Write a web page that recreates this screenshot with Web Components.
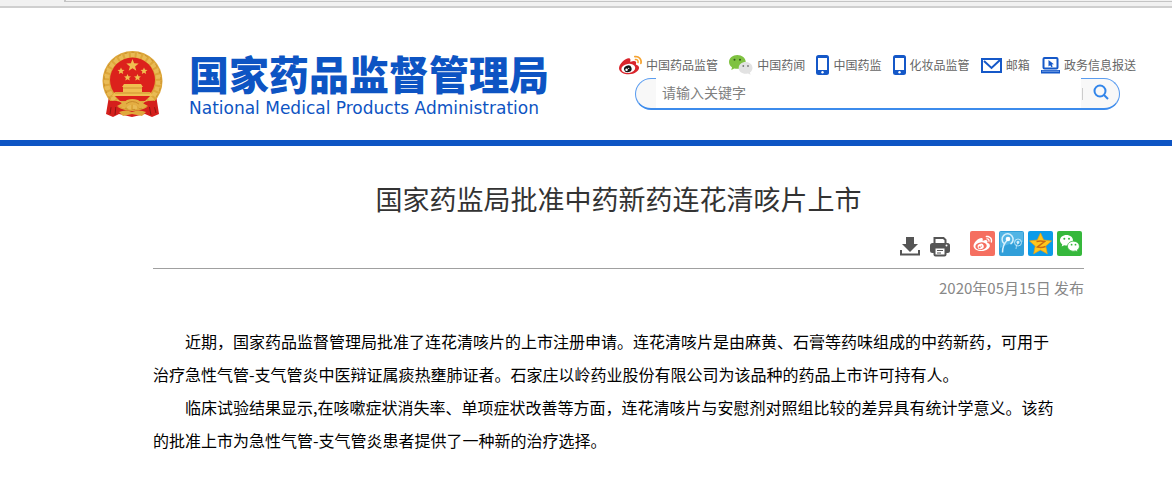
<!DOCTYPE html>
<html lang="zh-CN">
<head>
<meta charset="utf-8">
<title>国家药监局批准中药新药连花清咳片上市</title>
<style>
    body {
        margin: 0;
        background: #fff;
        color: #000;
        font-family: "Noto Sans CJK SC", "Noto Sans", sans-serif;
    }
</style>
</head>
<body>
<window-edge></window-edge>
<site-header>
    <site-logo slot="logo"></site-logo>
    <quick-link icon="weibo">中国药品监管</quick-link>
    <quick-link icon="wechat">中国药闻</quick-link>
    <quick-link icon="phone">中国药监</quick-link>
    <quick-link icon="phone">化妆品监管</quick-link>
    <quick-link icon="mail">邮箱</quick-link>
    <quick-link icon="laptop">政务信息报送</quick-link>
    <search-bar slot="search"></search-bar>
</site-header>
<news-article>
    <span slot="title">国家药监局批准中药新药连花清咳片上市</span>
    <article-tools slot="tools"></article-tools>
    <span slot="date">2020年05月15日 发布</span>
    <news-paragraph>近期，国家药品监督管理局批准了连花清咳片的上市注册申请。连花清咳片是由麻黄、石膏等药味组成的中药新药，可用于<br>治疗急性气管-支气管炎中医辩证属痰热壅肺证者。石家庄以岭药业股份有限公司为该品种的药品上市许可持有人。</news-paragraph>
    <news-paragraph>临床试验结果显示,在咳嗽症状消失率、单项症状改善等方面，连花清咳片与安慰剂对照组比较的差异具有统计学意义。该药<br>的批准上市为急性气管-支气管炎患者提供了一种新的治疗选择。</news-paragraph>
</news-article>

<script>
const WEIBO_BODY = 'M18.059 11.649c-.346-.105-.57-.18-.405-.615.375-.977.42-1.804 0-2.404-.781-1.112-2.915-1.053-5.364-.03 0 0-.766.331-.571-.271.376-1.217.315-2.224-.27-2.809-1.338-1.337-4.869.045-7.888 3.08C1.309 10.87 0 13.273 0 15.348c0 3.981 5.099 6.395 10.086 6.395 6.536 0 10.888-3.801 10.888-6.82 0-1.822-1.547-2.854-2.915-3.284z';
const WEIBO_WAVES = 'M19.967 6.557c-.766-.856-1.908-1.187-2.96-.962-.436.09-.706.511-.616.932.09.42.511.691.932.602.511-.105 1.067.044 1.442.465.376.421.466.977.316 1.473-.136.406.089.856.51.992.405.119.857-.105.992-.512.33-1.021.12-2.178-.646-3.035zM22.385 4.362c-1.576-1.757-3.905-2.419-6.054-1.968-.496.104-.812.587-.706 1.081.104.496.586.813 1.082.707 1.532-.331 3.185.15 4.296 1.383 1.112 1.246 1.429 2.943.947 4.416-.165.48.106 1.007.586 1.157.479.165.991-.104 1.157-.586.675-2.088.241-4.478-1.338-6.235z';

const weiboEye = (white, pupil) => `
    <ellipse cx="9.7" cy="15.6" rx="7.3" ry="4.8" fill="${white}" transform="rotate(-8 9.7 15.6)"/>
    <ellipse cx="9.2" cy="16" rx="4" ry="3.5" fill="${pupil}" transform="rotate(-18 9.2 16)"/>
    <circle cx="7.9" cy="16.9" r="1.3" fill="${white}"/>
    <circle cx="10.1" cy="15.5" r=".7" fill="${white}"/>`;

const LINK_ICONS = {
    weibo: `<svg width="23" height="22" viewBox="0 1 24 22"><path fill="#d9242b" d="${WEIBO_BODY}"/>${weiboEye('#fff', '#151515')}<path fill="#f5a331" d="${WEIBO_WAVES}"/></svg>`,
    wechat: `<svg width="24" height="20" viewBox="0 0 24 20">
        <path fill="#7fc241" d="M8.300 0C3.700 0 0 3 0 7c0 2.200 1.200 4 3 5.300L2.300 15l3-1.600c1 .3 2 .4 3 .4 4.700 0 8.400-3 8.400-6.900S13 0 8.300 0z"/>
        <circle cx="5.500" cy="4.800" r="1" fill="#32591c"/><circle cx="11" cy="4.800" r="1" fill="#32591c"/>
        <path fill="#e2e2e2" d="M16.700 7c-4 0-7 2.600-7 5.900s3 5.800 7 5.800c.8 0 1.500-.1 2.300-.3l2.600 1.400-.7-2.300c1.600-1.100 2.600-2.700 2.600-4.600 0-3.300-3-5.900-6.800-5.900z"/>
        <circle cx="14.300" cy="11" r=".9" fill="#777"/><circle cx="19" cy="11" r=".9" fill="#777"/></svg>`,
    phone: `<svg width="13" height="20" viewBox="0 0 13 20"><rect width="13" height="20" rx="2.500" fill="#1558c8"/><rect x="2" y="3" width="9" height="12" fill="#fff"/><circle cx="6.500" cy="17.300" r="1.200" fill="#fff"/></svg>`,
    mail: `<svg width="21" height="15" viewBox="0 0 21 15"><rect x="1" y="1" width="19" height="13" fill="#fff" stroke="#1558c8" stroke-width="2"/><path d="M3 3l7.500 7L19 2" fill="none" stroke="#1558c8" stroke-width="2"/></svg>`,
    laptop: `<svg width="19" height="17" viewBox="0 0 19 17"><rect x="2.500" y="1" width="14" height="10.500" rx="1" fill="#fff" stroke="#1558c8" stroke-width="2"/><path d="M0 13h19v3.500H0z" fill="#1558c8"/><path d="M1 14.200h17" stroke="#7fa5e4"/><path d="M7.500 3v6.500l1.700-1.300 1.200 2 1.300-.7-1-1.900 2.200-.4z" fill="#1558c8"/></svg>`
};

class WindowEdge extends HTMLElement {
    constructor() {
        super();
        this.attachShadow({ mode: 'open' }).innerHTML = `
            <style>
                :host {
                    display: block;
                    height: 6px;
                    padding-left: 64px;
                    background: #f1f1f1;
                    border-bottom: 2px solid #cfcfcf;
                }
                div {
                    height: 1px;
                    border-left: 2px solid #c4c4c4;
                    border-bottom: 1px solid #c4c4c4;
                }
            </style>
            <div></div>
        `;
    }
}

class SiteHeader extends HTMLElement {
    constructor() {
        super();
        this.attachShadow({ mode: 'open' }).innerHTML = `
            <style>
                :host {
                    display: block;
                    border-bottom: 6px solid #0e55c4;
                }
                header {
                    display: flex;
                    justify-content: space-between;
                    gap: 24px;
                    padding: 43px 36px 22px 102px;
                }
                .side {
                    flex: 0 1 517px;
                    padding-top: 2px;
                }
                nav {
                    display: flex;
                    justify-content: space-between;
                    height: 24px;
                }
                .search {
                    padding: 1px 16px 0 16px;
                }
            </style>
            <header>
                <slot name="logo"></slot>
                <div class="side">
                    <nav><slot></slot></nav>
                    <div class="search"><slot name="search"></slot></div>
                </div>
            </header>
        `;
    }
}

class SiteLogo extends HTMLElement {
    constructor() {
        super();
        this.attachShadow({ mode: 'open' }).innerHTML = `
            <style>
                :host {
                    display: block;
                }
                a {
                    display: flex;
                    gap: 26px;
                    color: #0d54c3;
                    text-decoration: none;
                    white-space: nowrap;
                }
                svg {
                    display: block;
                }
                strong, span {
                    display: block;
                }
                strong {
                    padding: 4px 0 1px;
                    font-family: "Liberation Sans", "Noto Sans CJK SC", sans-serif;
                    font-size: 40px;
                    font-weight: 900;
                    line-height: 42px;
                }
                span {
                    font-family: "DejaVu Sans", sans-serif;
                    font-size: 17px;
                    line-height: 20px;
                }
            </style>
            <a href="#">
                <svg width="61" height="67" viewBox="0 0 61 67" aria-hidden="true">
                    <path fill="#d51f1c" d="M7 45L4 63l7 3 6-3 13 3 13-3 7 3 7-3-3-19z"/>
                    <path stroke="#8e1412" stroke-width="1" d="M10 50L8 63M14 54l-1 10M51 50l3 12M47 54l2 10"/>
                    <circle cx="30.500" cy="30" r="30" fill="#dda63a"/>
                    <circle cx="30.500" cy="30" r="26" fill="none" stroke="#e9bb55" stroke-width="5" stroke-dasharray="4 2"/>
                    <circle cx="30.500" cy="30" r="28.500" fill="none" stroke="#c98f2d" stroke-width="1" stroke-dasharray="3 4"/>
                    <circle cx="30.500" cy="29" r="22.500" fill="#dc211c"/>
                    <g fill="#f0bf50">
                        <path d="M30.500 8l1.600 4.300 4.600.2-3.600 2.900 1.200 4.400-3.800-2.500-3.800 2.500 1.200-4.400-3.600-2.900 4.600-.2z"/>
                        <path d="M19 16.500l1 2.300 2.500.2-1.900 1.600.6 2.400-2.200-1.300-2.200 1.300.6-2.400-1.900-1.600 2.500-.2z"/>
                        <path d="M42 16.500l1 2.300 2.500.2-1.900 1.600.6 2.400-2.200-1.300-2.200 1.300.6-2.400-1.900-1.600 2.500-.2z"/>
                        <path d="M25.500 23l1 2.300 2.500.2-1.900 1.600.6 2.400-2.200-1.300-2.200 1.300.6-2.400-1.900-1.600 2.500-.2z"/>
                        <path d="M35.500 23l1 2.300 2.500.2-1.900 1.600.6 2.400-2.200-1.300-2.200 1.300.6-2.400-1.900-1.600 2.500-.2z"/>
                        <path d="M22 33h17l2 3H20zM21 36h19v5h8l3 4H10l3-4h8z"/>
                    </g>
                    <path stroke="#cf9330" stroke-width="1" d="M21 37h19M13 42h35"/>
                    <path fill="#dc211c" d="M13 45h35l-5 5H18z"/>
                    <path fill="#d51f1c" d="M8 50q10-1 12 3-3 4-13 3zM53 50q-10-1-12 3 3 4 13 3z"/>
                    <path fill="#e4ae43" d="M15 55q7-4 10-6 5-2 11 0 4 3 10 6-8 3-11 0-5-3-9 0-4 3-11 0z"/>
                    <path fill="none" stroke="#c98a2a" d="M24 53q6-5 13 0"/>
                    <path fill="#e0a83c" d="M17 61q7-3 13 0 7-3 14 0l-4 4-10-2-9 2z"/>
                </svg>
                <div>
                    <strong>国家药品监督管理局</strong>
                    <span>National Medical Products Administration</span>
                </div>
            </a>
        `;
    }
}

class QuickLink extends HTMLElement {
    constructor() {
        super();
        this.attachShadow({ mode: 'open' });
    }

    connectedCallback() {
        this.shadowRoot.innerHTML = `
            <style>
                :host {
                    display: block;
                }
                a {
                    display: flex;
                    align-items: center;
                    gap: 4px;
                    height: 24px;
                    color: #666;
                    font-size: 12px;
                    line-height: 24px;
                    text-decoration: none;
                    white-space: nowrap;
                }
                svg {
                    display: block;
                    flex: none;
                }
            </style>
            <a href="#">${LINK_ICONS[this.getAttribute('icon')]}<slot></slot></a>
        `;
    }
}

class SearchBar extends HTMLElement {
    constructor() {
        super();
        this.attachShadow({ mode: 'open' }).innerHTML = `
            <style>
                :host {
                    display: block;
                }
                form {
                    display: flex;
                    height: 29px;
                    padding: 0 4px 0 20px;
                    background: #f8f8f8;
                    border: 1px solid #5b9df0;
                    border-bottom: 2px solid #3c8bec;
                    border-radius: 16px;
                }
                /* the field covers the top border of the pill */
                input {
                    flex: 1;
                    min-width: 0;
                    height: 30px;
                    margin: -1px 0 0;
                    padding: 0 6px 2px;
                    box-sizing: border-box;
                    border: 0;
                    outline: 0;
                    background: #fff;
                    color: #333;
                    font-family: inherit;
                    font-size: 14px;
                }
                input::placeholder {
                    color: #808080;
                }
                button {
                    display: flex;
                    align-items: center;
                    justify-content: center;
                    width: 34px;
                    padding: 0 0 4px 6px;
                    border: 0;
                    background: linear-gradient(#ccc, #ccc) 1px 9px / 1px 12px no-repeat;
                }
            </style>
            <form>
                <input type="text" placeholder="请输入关键字" aria-label="请输入关键字">
                <button type="button" aria-label="搜索">
                    <svg width="16" height="16" viewBox="0 0 16 16" fill="none" stroke="#3185ea" stroke-width="2"><circle cx="7" cy="7" r="5.500"/><path d="M11 11l4 4"/></svg>
                </button>
            </form>
        `;
    }
}

class NewsArticle extends HTMLElement {
    constructor() {
        super();
        this.attachShadow({ mode: 'open' }).innerHTML = `
            <style>
                :host {
                    display: block;
                    padding: 35px 88px 24px 153px;
                }
                h1 {
                    margin: 0;
                    color: #333;
                    font-size: 27px;
                    font-weight: 400;
                    line-height: 36px;
                    text-align: center;
                }
                .tools {
                    padding: 14px 2px 12px 0;
                    border-bottom: 1px solid #a0a0a0;
                }
                .date {
                    margin-bottom: 26px;
                    padding-top: 8px;
                    color: #888;
                    font-size: 15px;
                    line-height: 22px;
                    text-align: right;
                }
            </style>
            <article>
                <h1><slot name="title"></slot></h1>
                <div class="tools"><slot name="tools"></slot></div>
                <div class="date"><slot name="date"></slot></div>
                <slot></slot>
            </article>
        `;
    }
}

class ArticleTools extends HTMLElement {
    constructor() {
        super();
        this.attachShadow({ mode: 'open' }).innerHTML = `
            <style>
                :host {
                    display: flex;
                    justify-content: flex-end;
                    align-items: flex-start;
                    gap: 20px;
                }
                div {
                    display: flex;
                    gap: 4px;
                }
                .actions {
                    gap: 10px;
                    padding-top: 5px;
                    margin-bottom: -2px;
                }
                button {
                    padding: 0;
                    border: 0;
                    background: none;
                }
                svg {
                    display: block;
                }
            </style>
            <div class="actions">
                <button type="button" aria-label="下载">
                    <svg width="20" height="22" viewBox="0 0 20 22"><path fill="#555" d="M6 1h8v7h4L10 16 2 8h4z"/><path d="M1 14v4.500h18V14" fill="none" stroke="#555" stroke-width="2"/></svg>
                </button>
                <button type="button" aria-label="打印">
                    <svg width="20" height="22" viewBox="0 0 20 22"><path d="M4.500 8V2h9l2 2v4" fill="#fff" stroke="#555" stroke-width="2"/><rect y="7" width="20" height="10" rx="2.500" fill="#555"/><circle cx="16.500" cy="9.500" r="1" fill="#fff"/><rect x="4.500" y="11.500" width="11" height="8" rx="1" fill="#fff" stroke="#555" stroke-width="2"/><path d="M7 14.500h6M7 17h4" stroke="#555"/></svg>
                </button>
            </div>
            <div>
                <button type="button" aria-label="分享到微博">
                    <svg width="25" height="25" viewBox="0 0 25 25"><rect width="25" height="25" rx="2" fill="#f56f60"/><g transform="translate(3.500 3) scale(.78)"><path fill="#fff" d="${WEIBO_BODY}"/>${weiboEye('#f56f60', '#fff')}<path fill="#fff" d="${WEIBO_WAVES}"/></g></svg>
                </button>
                <button type="button" aria-label="分享到腾讯微博">
                    <svg width="25" height="25" viewBox="0 0 25 25"><rect width="25" height="25" rx="2" fill="#319fd9"/><path fill="#53b5e5" d="M1 1h23v10Q12 11 1 17z"/><g fill="none" stroke="#d7f0fc"><path d="M3.500 21.500Q3.500 14 8 9.500" stroke-width="1.500"/><path d="M5 12.500A5.500 5.500 0 1 1 11.500 13" stroke-width="1.500"/><circle cx="19" cy="11.500" r="3.500" stroke-width=".8"/><path d="M17 18q0-3.500 2-6.500" stroke-width=".7"/></g><circle cx="9" cy="8" r="2.300" fill="#fff"/><circle cx="19" cy="11.500" r="1.400" fill="#d7f0fc"/></svg>
                </button>
                <button type="button" aria-label="分享到QQ空间">
                    <svg width="25" height="25" viewBox="0 0 25 25"><rect width="25" height="25" rx="2" fill="#0c9be9"/><path fill="#ffc61c" stroke="#f4a00c" stroke-width=".7" stroke-linejoin="round" d="M12.500 2l3.200 7 7.800.9-5.800 5.200 1.600 7.700-6.800-3.900-6.800 3.900 1.600-7.700L1.500 9.900l7.800-.9z"/><path d="M8.500 10.500q4-1 8 0l-7 5.500q4 1 8-.5" fill="none" stroke="#c86a12" stroke-width="1.500"/></svg>
                </button>
                <button type="button" aria-label="分享到微信">
                    <svg width="25" height="25" viewBox="0 0 25 25"><rect width="25" height="25" rx="2" fill="#36b83c"/><path fill="#fff" d="M9.500 4C5.800 4 3 6.300 3 9.300c0 1.700.9 3.100 2.300 4.100l-.6 2.200 2.500-1.300c.8.200 1.500.3 2.300.3 3.600 0 6.500-2.300 6.500-5.300S13.100 4 9.500 4z"/><path fill="#fff" stroke="#36b83c" stroke-width=".8" d="M16.500 10.200c-3.500 0-6 2.200-6 5s2.500 5 6 5c.7 0 1.300-.1 2-.3l2.300 1.200-.6-2c1.300-.9 2.200-2.300 2.200-3.900 0-2.800-2.600-5-5.900-5z"/><g fill="#36b83c"><circle cx="7.300" cy="7.800" r="1"/><circle cx="12" cy="7.800" r="1"/><circle cx="14.600" cy="13.700" r=".9"/><circle cx="18.500" cy="13.700" r=".9"/></g></svg>
                </button>
            </div>
        `;
    }
}

class NewsParagraph extends HTMLElement {
    constructor() {
        super();
        this.attachShadow({ mode: 'open' }).innerHTML = `
            <style>
                :host {
                    display: block;
                }
                p {
                    margin: 0;
                    font-size: 16px;
                    line-height: 33px;
                    text-indent: 2em;
                }
            </style>
            <p><slot></slot></p>
        `;
    }
}

customElements.define('window-edge', WindowEdge);
customElements.define('site-header', SiteHeader);
customElements.define('site-logo', SiteLogo);
customElements.define('quick-link', QuickLink);
customElements.define('search-bar', SearchBar);
customElements.define('news-article', NewsArticle);
customElements.define('article-tools', ArticleTools);
customElements.define('news-paragraph', NewsParagraph);
</script>
</body>
</html>
